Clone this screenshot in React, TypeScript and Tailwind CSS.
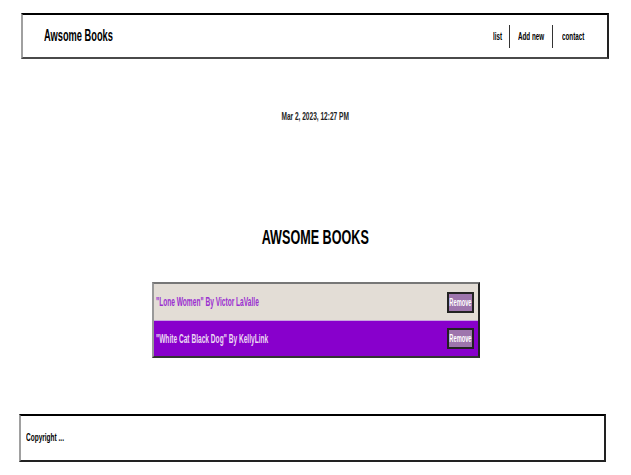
import React from "react";

const font = { fontFamily: '"Liberation Sans", Arial, sans-serif' };

function Sq({ w, children, center = false, s = "scale-x-[0.6]" }: { w: number; children: React.ReactNode; center?: boolean; s?: string }) {
  return (
    <span className={center ? "inline-flex justify-center" : "inline-flex"} style={{ width: w }}>
      <span className={(center ? "inline-block whitespace-nowrap origin-center " : "inline-block whitespace-nowrap origin-left ") + s}>
        {children}
      </span>
    </span>
  );
}

export default function App() {
  return (
    <div className="w-full min-h-[475px] bg-white text-black" style={font}>
      <header className="ml-[21px] mr-[22px] mt-[13px] h-[46px] flex items-center justify-between border-t-2 border-t-black border-l-2 border-l-[#a0a0a0] border-b-2 border-b-[#4a4a4a] border-r-2 border-r-[#222] pl-[21px] pr-[20px]">
        <h2 className="text-[16px] font-bold leading-none">
          <Sq w={70} s="scale-x-[0.58]">Awsome Books</Sq>
        </h2>
        <ul className="flex items-center text-[11px] font-bold">
          <li className="pr-[7px] flex items-center">
            <Sq w={9} s="scale-x-[0.57]">list</Sq>
          </li>
          <li className="pl-[8px] pr-[8px] border-l border-l-[#333] h-[23px] flex items-center">
            <Sq w={26} s="scale-x-[0.57]">Add new</Sq>
          </li>
          <li className="pl-[9px] border-l border-l-[#333] h-[23px] flex items-center">
            <Sq w={25} s="scale-x-[0.57]">contact</Sq>
          </li>
        </ul>
      </header>
      <p className="mt-[50px] text-center text-[11.5px] font-bold text-[#222] leading-[14px]">
        <Sq w={70} center s="scale-x-[0.57]">Mar 2, 2023, 12:27 PM</Sq>
      </p>
      <h1 className="mt-[101px] text-center text-[21px] font-bold leading-[26px]">
        <Sq w={108} center s="scale-x-[0.6]">AWSOME BOOKS</Sq>
      </h1>
      <ul className="mt-[32px] mx-auto w-[328px] border-t-2 border-t-[#777] border-l-2 border-l-[#999] border-b-2 border-b-[#333] border-r-2 border-r-[#222]">
        <li className="h-[36px] bg-[#e3ddd6] flex items-center justify-between pl-[2px] pr-[4px] text-[12px] font-bold text-[#9a2fd0]">
          <Sq w={102} s="scale-x-[0.55]">"Lone Women" By Victor LaValle</Sq>
          <button className="h-[21px] w-[27px] flex items-center justify-center bg-[#9e75ad] text-white text-[10px] border-2 border-[#222]">
            <Sq w={20} center s="scale-x-[0.57]">Remove</Sq>
          </button>
        </li>
        <li className="h-[36px] bg-[#8800cc] flex items-center justify-between pl-[2px] pr-[4px] text-[12px] font-bold text-[#ead9f2] border-t border-t-[#c9a3e0]">
          <Sq w={110} s="scale-x-[0.55]">"White Cat Black Dog" By KellyLink</Sq>
          <button className="h-[21px] w-[27px] flex items-center justify-center bg-[#9e75ad] text-white text-[10px] border-2 border-[#222]">
            <Sq w={20} center s="scale-x-[0.57]">Remove</Sq>
          </button>
        </li>
      </ul>
      <footer className="mt-[56px] ml-[19px] w-[587px] h-[48px] flex items-center pl-[5px] border-t-2 border-t-black border-l-2 border-l-[#a0a0a0] border-b-2 border-b-[#222] border-r-2 border-r-[#222] text-[10.5px] font-bold">
        <Sq w={42} s="scale-x-[0.62]">Copyright ...</Sq>
      </footer>
    </div>
  );
}
